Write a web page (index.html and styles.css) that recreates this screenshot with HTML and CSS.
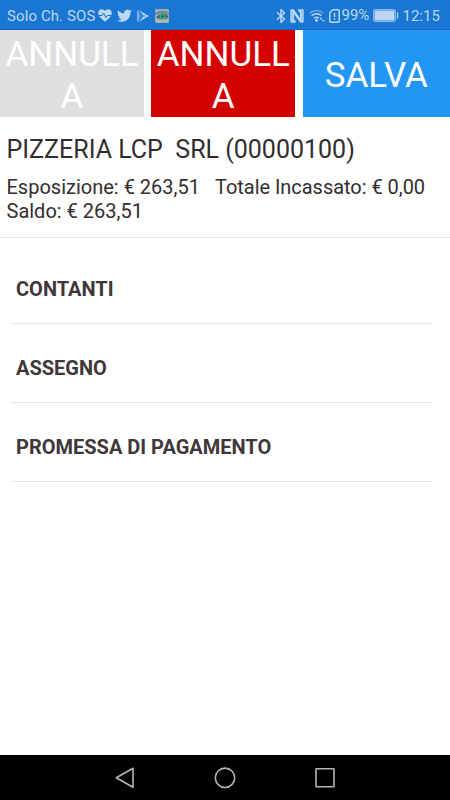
FILE: index.html
```html
<!DOCTYPE html>
<html lang="it">
<head>
    <meta charset="UTF-8">
    <meta name="viewport" content="width=device-width, initial-scale=1.0">
    <title>Incasso</title>
    <link rel="stylesheet" href="styles.css">
</head>

<body>
    <div class="status">
        <div class="status-left">
            <span class="carrier">Solo Ch. SOS</span>
            <svg class="heart" width="14" height="13" viewBox="0 0 14 13">
                <path class="fill" d="M7 12.800C4 10.300.2 7.400.2 4 .2 1.800 1.800.2 3.800.2 5.200.2 6.300.9 7 2 7.700.9 8.800.2 10.200.2c2 0 3.600 1.600 3.600 3.800 0 3.400-3.800 6.300-6.800 8.800z"/>
                <path class="pulse" d="M0 6.500h4l1.500-2.400 2.400 4.400 1.400-2H14"/>
            </svg>
            <svg class="twitter" width="15" height="14" viewBox="0 2 24 21">
                <path class="fill" d="M23.950 4.570a10 10 0 0 1-2.820.77 4.960 4.960 0 0 0 2.160-2.720c-.95.55-2 .96-3.130 1.180a4.920 4.920 0 0 0-8.380 4.480C7.690 8.100 4.070 6.130 1.640 3.160a4.920 4.920 0 0 0 1.520 6.570 4.900 4.900 0 0 1-2.230-.61v.06a4.920 4.920 0 0 0 3.950 4.830 5 5 0 0 1-2.210.08 4.940 4.940 0 0 0 4.600 3.420A9.870 9.870 0 0 1 0 19.540a14 14 0 0 0 7.550 2.210c9.050 0 14-7.500 14-13.980 0-.21 0-.42-.02-.63a9.940 9.940 0 0 0 2.420-2.570z"/>
            </svg>
            <svg class="play" width="12" height="12" viewBox="0 0 12 12">
                <path class="fill" d="M.2.500h1.500v11H.2z" opacity=".8"/>
                <path class="fill" d="M2 .500 9 4.300 7 6zM9.400 4.500 12 6 9.400 7.500 7.800 6zM7 6l2 1.700-7 3.800z"/>
                <path class="fill" d="M2 2.500 5.500 6 2 9.500z" opacity=".3"/>
            </svg>
            <svg class="eye" width="14" height="14" viewBox="0 0 14 14">
                <rect width="14" height="14" rx="1" fill="#9dabb5"/>
                <path d="M0 4Q7 0 14 4v1.500Q8 2.500 0 6z" fill="#6d8594"/>
                <path d="M1 8.500Q4 4.500 8.500 4.500t5 4Q8 11.500 1 8.500z" fill="#4b6c73"/>
                <circle cx="7.500" cy="7.500" r="2.900" fill="#2ba577"/>
                <circle cx="7.500" cy="7.300" r=".8" fill="#11352f"/>
                <path d="M1 11q6 1.500 12 0v1.500q-6 1.500-12 0z" fill="#babdbe"/>
            </svg>
        </div>
        <div class="status-right">
            <svg class="bluetooth" width="10" height="14" viewBox="0 0 10 14">
                <path class="line" d="M1 3.500 8.500 10 5 13.200V.8L8.500 4 1 10.500"/>
            </svg>
            <svg class="nfc" width="14" height="14" viewBox="0 0 14 14">
                <path class="fill" d="M1.500.3h2.200L10 9V3.800L8.300 2.200V.3h4.200a1.200 1.200 0 0 1 1.200 1.200v11a1.200 1.200 0 0 1-1.200 1.200h-2.200L4 5v5.200l1.700 1.600v1.900H1.500a1.200 1.200 0 0 1-1.200-1.200v-11A1.200 1.200 0 0 1 1.500.3z"/>
                <path class="gap" d="M2 1.500v11M12 1.500v11"/>
            </svg>
            <svg class="wifi" width="16" height="13" viewBox="0 0 16 13">
                <path class="line faint" d="M.6 4.200a10 10 0 0 1 13.800 0"/>
                <path class="line" d="M2.600 6.800a7 7 0 0 1 9.800 0M5 9.200a3.900 3.900 0 0 1 5 0"/>
                <circle class="fill" cx="7.500" cy="11.300" r="1.500"/>
                <path class="fill" d="M12 8l1.300 2.500h-2.600zM13 11h2.600l-1.300 2z"/>
            </svg>
            <svg class="sim" width="11" height="14" viewBox="0 0 11 14">
                <path class="line" d="M3.800.8h5.400a1 1 0 0 1 1 1v10.400a1 1 0 0 1-1 1H1.800a1 1 0 0 1-1-1V3.800z"/>
                <path class="line" d="M5.500 4v4M5.500 9.300v1.500"/>
            </svg>
            <span class="percent">99%</span>
            <svg class="battery" width="26" height="13" viewBox="0 0 26 13">
                <rect class="frame" x=".5" y=".5" width="22" height="12" rx="1.500"/>
                <rect class="fill" x="1.500" y="1.500" width="20" height="10"/>
                <path class="fill" d="M24 3.500h1.200v6H24z"/>
            </svg>
            <span class="clock">12:15</span>
        </div>
    </div>

    <div class="actions">
        <button class="btn btn-disabled">ANNULL<br>A</button>
        <button class="btn btn-cancel">ANNULL<br>A</button>
        <button class="btn btn-save">SALVA</button>
    </div>

    <div class="customer">
        <h1 class="name">PIZZERIA LCP&nbsp; SRL (00000100)</h1>
        <p class="totals">
            <span class="exposure">Esposizione: € 263,51</span>
            <span class="collected">Totale Incassato: € 0,00</span>
        </p>
        <p class="totals">Saldo: € 263,51</p>
    </div>

    <ul class="payments">
        <li class="payment"><span class="cash">CONTANTI</span></li>
        <li class="payment"><span class="cheque">ASSEGNO</span></li>
        <li class="payment"><span class="promise">PROMESSA DI PAGAMENTO</span></li>
    </ul>

    <div class="navbar">
        <svg width="22" height="22" viewBox="0 0 22 22">
            <path d="M19 1.300v19L2.300 10.800z"/>
        </svg>
        <svg width="22" height="22" viewBox="0 0 22 22">
            <circle cx="11" cy="10.800" r="9.700"/>
        </svg>
        <svg width="22" height="22" viewBox="0 0 22 22">
            <rect x="2" y="1.800" width="18" height="18" rx=".5"/>
        </svg>
    </div>
</body>
</html>
```

FILE: styles.css
```css
*{
    margin: 0;
    padding: 0;
    box-sizing: border-box;
}
body{
    display: flex;
    flex-direction: column;
    height: 100vh;
    overflow: hidden;
    background: #fff;
    color: #332d2f;
    font-family: Roboto, sans-serif;
}
svg{
    flex: none;
    display: block;
}

/* status bar */
.status{
    flex: none;
    display: flex;
    justify-content: space-between;
    height: 30px;
    padding: 2px 9.5px 0 7px;
    background: #1976d2;
    border-bottom: 1px solid #1565c0;
    color: #bbd7f3;
    font-size: 15px;
    white-space: nowrap;
}
.status-left,
.status-right{
    display: flex;
    align-items: center;
}
.carrier{
    width: 90.5px;
    letter-spacing: .1px;
}
.fill{
    fill: #bbd7f3;
}
.line{
    fill: none;
    stroke: #bbd7f3;
    stroke-width: 1.5;
}
.faint{
    opacity: .5;
}
.pulse{
    fill: none;
    stroke: #1976d2;
    stroke-width: 1;
}
.gap{
    fill: none;
    stroke: #1976d2;
    stroke-width: .6;
    opacity: .5;
}
.twitter{
    margin-left: 5px;
}
.play{
    margin-left: 5px;
}
.eye{
    margin-left: 6px;
}
.nfc{
    margin-left: 4px;
}
.wifi{
    margin-left: 5px;
}
.sim{
    margin-left: 4px;
}
.percent{
    width: 28px;
    margin-left: 2px;
    padding-bottom: 1px;
}
.battery{
    margin-left: 3px;
    margin-bottom: 1px;
}
.frame{
    fill: none;
    stroke: #8bbae8;
}
.clock{
    width: 38px;
    margin-left: 4px;
}

/* buttons */
.actions{
    flex: none;
    display: grid;
    grid-template-columns: 144px 143.8px 1fr;
    column-gap: 7.4px;
    height: 87px;
}
.btn{
    padding-top: 4px;
    border: 0;
    color: #fff;
    font-family: inherit;
    font-size: 35px;
    line-height: 41.5px;
}
.btn-disabled{
    background: #dfdfdf;
}
.btn-cancel{
    background: #d50000;
}
.btn-save{
    background: #2196f3;
}

/* customer */
.customer{
    flex: none;
    height: 121px;
    padding: 18px 6.5px 0;
    border-bottom: 1px solid #e4e4e4;
    white-space: nowrap;
}
.name{
    font-size: 25px;
    font-weight: 400;
    line-height: 30px;
    margin-bottom: 10px;
}
.totals{
    display: flex;
    font-size: 20px;
    line-height: 24px;
}
.exposure{
    width: 208.5px;
}
.collected{
    letter-spacing: -.04px;
}

/* payments */
.payments{
    flex: 1;
    padding: 7px 18px 0 10px;
    list-style: none;
}
.payment{
    display: flex;
    align-items: center;
    height: 79px;
    padding: 9px 6px 0;
    border-bottom: 1px solid #e6e6e6;
    color: #3f3739;
    font-size: 20px;
    font-weight: 700;
}

/* navigation bar */
.navbar{
    flex: none;
    display: flex;
    justify-content: center;
    align-items: center;
    gap: 78px;
    height: 45px;
    background: #000;
}
.navbar svg{
    fill: none;
    stroke: #b5b5b5;
    stroke-width: 1.6;
    stroke-linejoin: round;
}
```
